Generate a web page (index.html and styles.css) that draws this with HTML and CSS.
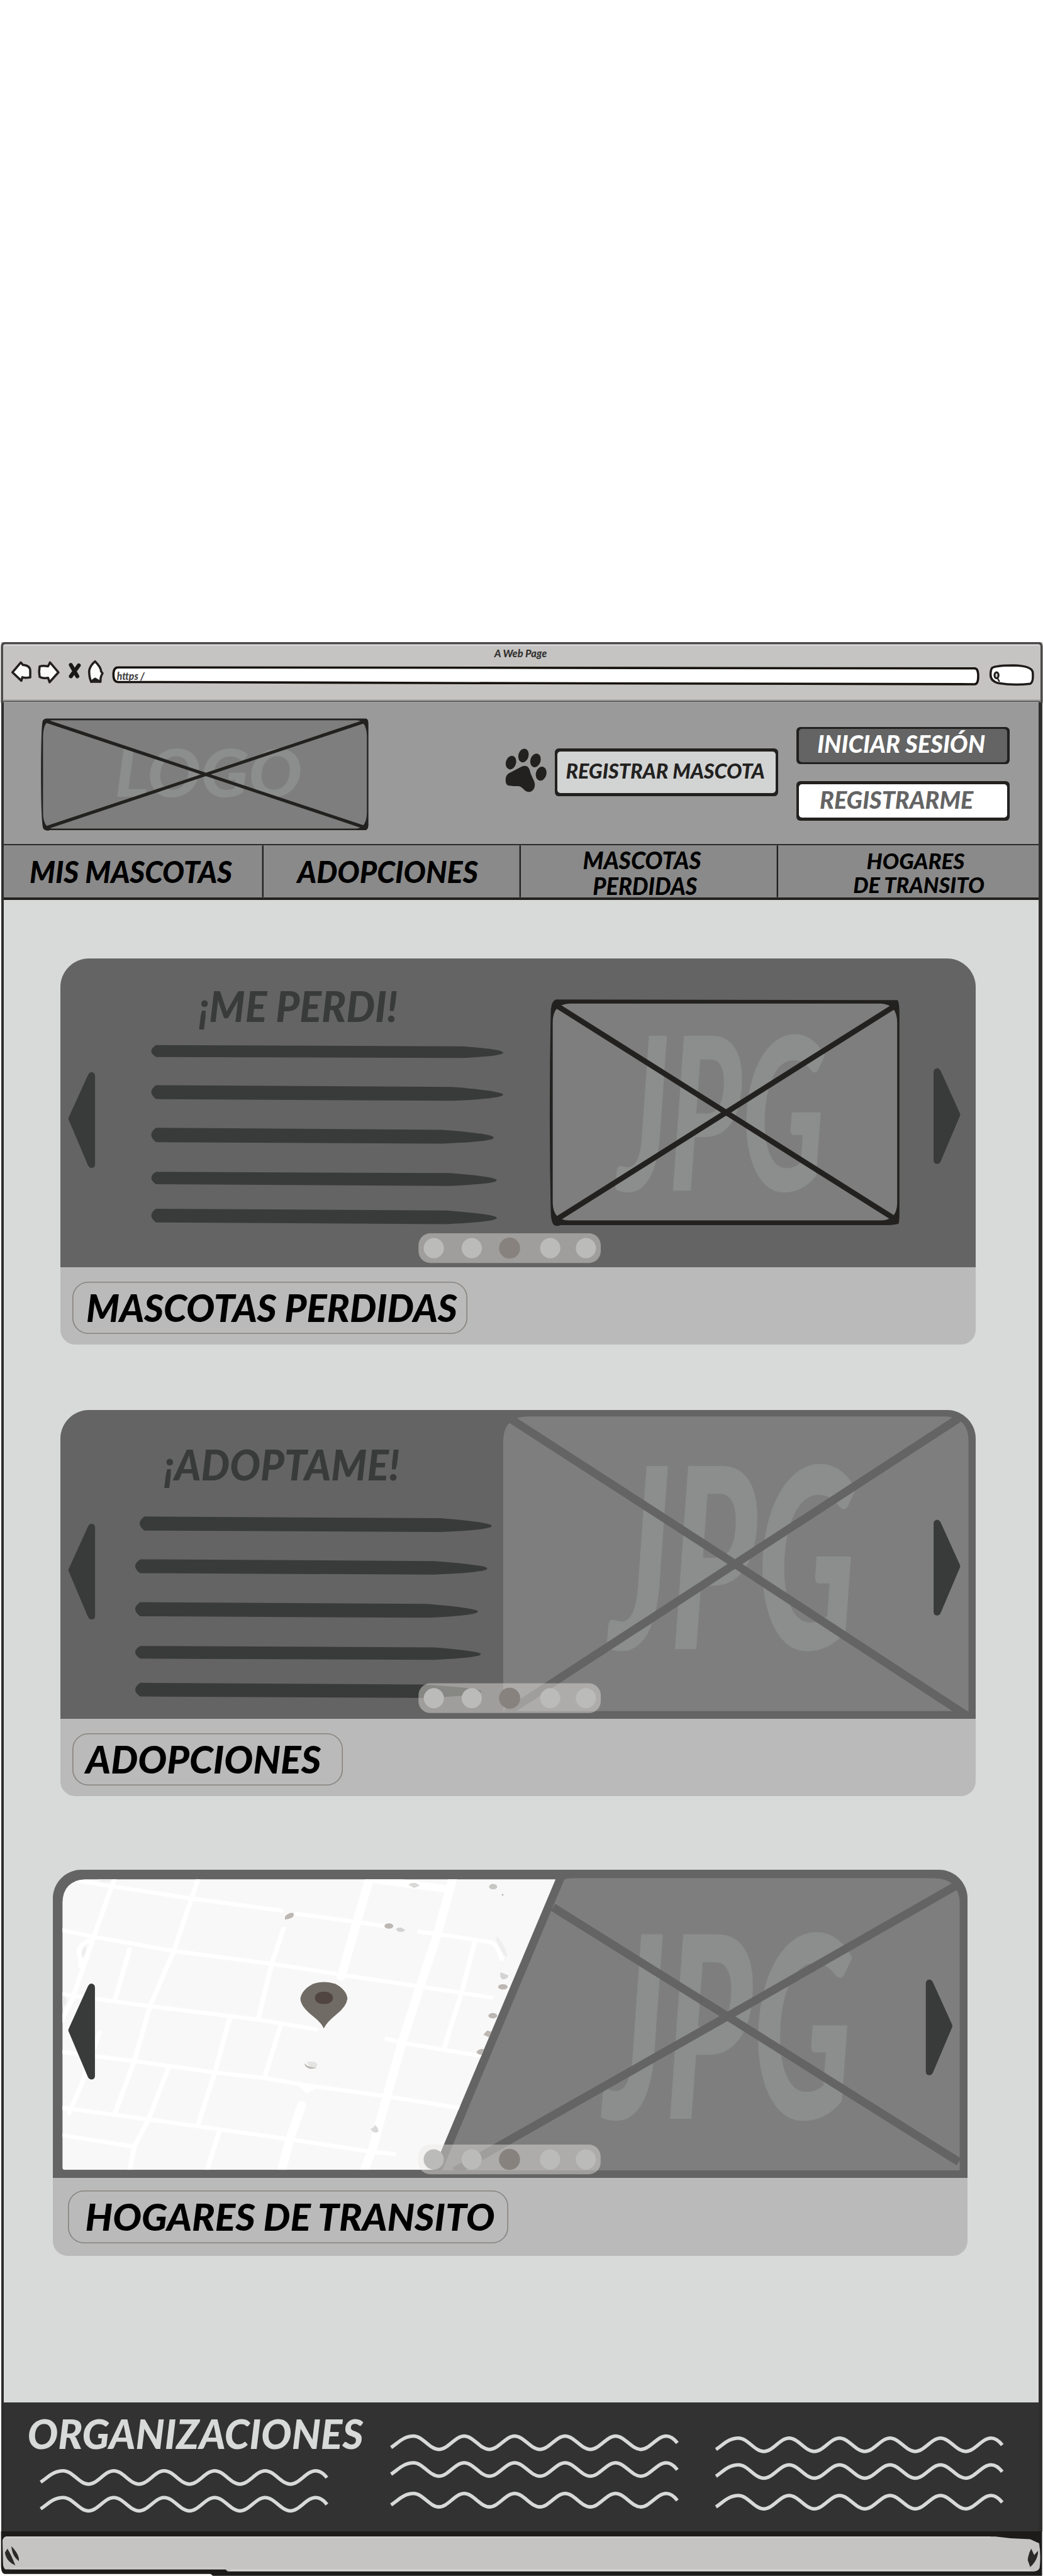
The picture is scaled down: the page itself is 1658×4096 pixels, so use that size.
FILE: index.html
```html
<!DOCTYPE html>
<html lang="es">
<head>
<meta charset="utf-8">
<title>A Web Page</title>
<link rel="stylesheet" href="styles.css">
</head>
<body>
<svg class="defs" aria-hidden="true">
  <defs>
    <path id="wave" d="M0 27C14 18 25 4 45.7 4C64 4 78 31 96.6 31S129 4 147.6 4S180 31 198.5 31S231 4 249.5 4S282 31 300.4 31S333 4 351.4 4S384 31 402.3 31S435 4 453.3 4S486 31 504.2 31S537 4 555.2 4C564 4 571 9 578 18"/>
    <path id="arrow" d="M1 91L40 5Q43 0 47 0Q54 1 54 8V186Q54 193.500 47 193.500Q43 193.500 40 189L1 97Q-.5 94 1 91Z"/>
    <g id="dots">
      <rect class="pill" width="368" height="60" rx="24"/>
      <circle cx="31" cy="30" r="20.400"/><circle cx="107.500" cy="30" r="20.400"/>
      <circle class="on" cx="184" cy="30" r="21.300"/>
      <circle cx="266" cy="30" r="20.400"/><circle cx="338" cy="30" r="20.400"/>
    </g>
  </defs>
</svg>

<div class="browser">
  <svg class="toolbar" viewBox="0 1297 2106 121">
    <rect x="2" y="1297" width="2103" height="121" fill="#c6c4c2"/>
    <path d="M8 1303.500H2099" stroke="#d9d9dd" stroke-width="2"/>
    <path d="M4 1420V1306Q4 1299 11 1299H2096Q2103 1299 2103 1306V1420" fill="none" stroke="#4a4848" stroke-width="4.500"/>
    <path d="M6 1413.500H2100" stroke="#a6a6a6" stroke-width="2"/>
    <path d="M6 1416.500H2100" stroke="#5e5e5e" stroke-width="2.500"/>
    <g fill="#fbfbfa" stroke="#221f1e" stroke-width="4.500" stroke-linejoin="round">
      <path d="M25 1358L42 1338L46 1343Q61 1344 61 1355V1368Q52 1370 45 1368L43 1375Z"/>
      <path d="M80 1346Q87 1344 97 1346L101 1338L118 1358L100 1378L97 1369Q85 1371 80 1367Q78 1356 80 1346Z"/>
      <path d="M192 1336Q204 1348 204 1356L207 1360Q202 1368 203 1377Q192 1374 184 1377Q180 1368 180 1356Q181 1345 192 1336Z"/>
      <path d="M184 1377L192 1371L202 1377Z" fill="#221f1e"/>
    </g>
    <path d="M143 1343L156 1366M159 1344L143 1366" stroke="#191817" stroke-width="8" stroke-linecap="round"/>
    <path d="M238 1348L1968 1350Q1975 1350 1975 1366Q1975 1382 1968 1382L1053 1380L238 1377.500Q229 1377 229 1363Q229 1348 238 1348Z" fill="#fff" stroke="#17130f" stroke-width="4.500"/>
    <text x="236" y="1373" textLength="56" lengthAdjust="spacingAndGlyphs" class="scribble">https /</text>
    <path d="M2003 1349Q2012 1344 2046 1344Q2082 1345 2085 1357Q2087 1378 2080 1381Q2048 1385 2016 1380Q2000 1376 2000 1363Q2000 1353 2003 1349Z" fill="#fff" stroke="#1f1c1b" stroke-width="4.500"/>
    <ellipse cx="2012" cy="1364" rx="4" ry="6" fill="#ccc" stroke="#221f1e" stroke-width="4"/>
    <path d="M2014 1370L2018 1377" stroke="#221f1e" stroke-width="3"/>
    <text x="998" y="1327" textLength="106" lengthAdjust="spacingAndGlyphs" class="scribble title">A Web Page</text>
  </svg>

  <div class="screen">
    <header class="header">
      <svg class="logo" viewBox="84 1451 660 227">
        <rect x="86" y="1453" width="656" height="223" rx="8" fill="#7e7e7e"/>
        <text x="232" y="1610" textLength="378" lengthAdjust="spacingAndGlyphs" font-size="134" class="ghost">LOGO</text>
        <path d="M94 1457L738 1672M738 1457L94 1672" stroke="#22211f" stroke-width="6.500"/>
        <path fill-rule="evenodd" fill="#22211f" d="M93 1451.500H739Q744 1452 744 1462V1668Q743 1677 738 1677H100Q94 1680 88 1675Q83 1668 83 1564Q83 1460 87 1455Q89 1452 93 1451.500ZM105 1455Q87 1456 87 1490V1640Q87 1672 105 1674H720Q741 1672 741 1640V1490Q741 1456 720 1455Z"/>
      </svg>
      <svg class="paw" viewBox="1020 1511 85 89" fill="#22211f">
        <g transform="translate(980 1300) scale(.33333)">
          <ellipse cx="155" cy="719" rx="31" ry="42" transform="rotate(17 155 719)"/>
          <ellipse cx="231" cy="676" rx="31" ry="42" transform="rotate(15 231 676)"/>
          <ellipse cx="304" cy="706" rx="31" ry="42" transform="rotate(17 304 706)"/>
          <ellipse cx="338" cy="786" rx="32" ry="43" transform="rotate(15 338 786)"/>
          <path d="M123 825C123 805 130 790 147 782L221 743C248 732 262 745 269 765C276 800 298 825 300 850C300 885 280 897 262 897C235 897 228 864 200 862C170 861 155 862 140 858C126 852 123 840 123 825Z"/>
        </g>
      </svg>
      <a class="btn add"><svg viewBox="1126 1518 440 84"><text x="1143" y="1573" textLength="402" lengthAdjust="spacingAndGlyphs" font-size="41.500">REGISTRAR MASCOTA</text></svg></a>
      <div class="account">
        <a class="btn login"><svg viewBox="1613 1472 421 67"><text x="1650" y="1520" textLength="339" lengthAdjust="spacingAndGlyphs" font-size="47">INICIAR SESIÓN</text></svg></a>
        <a class="btn signup"><svg viewBox="1613 1584 421 67"><text x="1655" y="1634" textLength="310" lengthAdjust="spacingAndGlyphs" font-size="47">REGISTRARME</text></svg></a>
      </div>
    </header>

    <nav class="nav">
      <a><svg viewBox="8 1707 524 106"><text x="60" y="1783" textLength="409" lengthAdjust="spacingAndGlyphs" font-size="60">MIS MASCOTAS</text></svg></a>
      <a><svg viewBox="532 1707 520 106"><text x="600" y="1783" textLength="365" lengthAdjust="spacingAndGlyphs" font-size="60">ADOPCIONES</text></svg></a>
      <a><svg viewBox="1052 1707 519.500 106"><text x="1177" y="1755" textLength="239" lengthAdjust="spacingAndGlyphs" font-size="47">MASCOTAS</text><text x="1197" y="1807" textLength="211" lengthAdjust="spacingAndGlyphs" font-size="47">PERDIDAS</text></svg></a>
      <a><svg viewBox="1571.500 1707 525.500 106"><text x="1750" y="1755" textLength="198" lengthAdjust="spacingAndGlyphs" font-size="44">HOGARES</text><text x="1723" y="1804" textLength="265" lengthAdjust="spacingAndGlyphs" font-size="44">DE TRANSITO</text></svg></a>
    </nav>

    <main class="main">
      <section class="card">
        <svg class="slide" viewBox="122 1936 1847 623">
          <text class="ink" x="401" y="2064.500" textLength="402" lengthAdjust="spacingAndGlyphs" font-size="84">¡ME PERDI!</text>
          <g class="bars">
            <path d="M315 2111L931 2113.500Q1016 2119 1016 2126.500Q1016 2133 931 2137L315 2135Q296 2123 315 2111Z"/>
            <path d="M315 2192L912 2195.500Q1016 2204 1016 2211Q1016 2219 912 2223.500L315 2220Q296 2206 315 2192Z"/>
            <path d="M315 2278L893 2282Q997 2290 997 2298Q997 2306 893 2310L315 2307Q296 2292 315 2278Z"/>
            <path d="M315 2367L909 2369.500Q1003 2377 1003 2384Q1003 2391 909 2395.500L315 2392Q296 2379 315 2367Z"/>
            <path d="M315 2441.500L900 2445Q1003 2453 1003 2460Q1003 2468 900 2472.500L315 2469Q296 2455 315 2441.500Z"/>
          </g>
          <rect x="1112" y="2021" width="702" height="450" rx="20" fill="#7e7e7e"/>
          <text class="ghost" x="1247" y="2405" textLength="420" lengthAdjust="spacingAndGlyphs" font-size="431">JPG</text>
          <path d="M1124 2031L1808 2463M1808 2031L1124 2463" stroke="#22211f" stroke-width="11"/>
          <path fill-rule="evenodd" fill="#22211f" d="M1122 2019L1812 2020Q1816 2024 1816 2050V2450Q1816 2468 1814 2472Q1806 2474 1797 2474.500H1132Q1123 2478 1118 2474Q1113 2468 1112 2450Q1108 2250 1112 2040Q1114 2022 1122 2019ZM1150 2027Q1116 2028 1116 2065V2430Q1117 2465 1150 2465H1778Q1811 2465 1811.500 2430V2065Q1811 2028 1778 2027Z"/>
          <use href="#arrow" class="ink" x="138" y="2165.500"/>
          <use href="#arrow" class="ink" transform="matrix(-1 0 0 1 1939 2157.500)"/>
          <use href="#dots" class="dots" x="845" y="2491"/>
        </svg>
        <div class="caption"><h2 class="tag"><svg class="t1" viewBox="0 0 798 106"><text x="28" y="81" textLength="749" lengthAdjust="spacingAndGlyphs" font-size="77">MASCOTAS PERDIDAS</text></svg></h2></div>
      </section>

      <section class="card">
        <svg class="slide" viewBox="122 2848 1847 623">
          <text class="ink" x="331" y="2990" textLength="476" lengthAdjust="spacingAndGlyphs" font-size="85">¡ADOPTAME!</text>
          <g class="bars">
            <path d="M292 3063L890 3066.500Q993 3075 993 3082Q993 3090 890 3094.500L292 3091.500Q272 3077 292 3063Z"/>
            <path d="M283 3149.500L877 3153Q984 3161 984 3168Q984 3176 877 3180.500L283 3177.500Q263 3163 283 3149.500Z"/>
            <path d="M283 3236L861 3239.500Q965 3248 965 3255Q965 3263 861 3267.500L283 3264.500Q263 3250 283 3236Z"/>
            <path d="M283 3324.500L877 3327.500Q971 3335 971 3341Q971 3348 877 3352.500L283 3350Q263 3337 283 3324.500Z"/>
            <path d="M283 3399L855 3402.500Q972 3410 972 3416Q972 3425 855 3429.500L283 3426.500Q263 3413 283 3399Z"/>
          </g>
          <path d="M1066 2861H1906Q1955.500 2861 1955.500 2912V3456H1016V2912Q1016 2861 1066 2861Z" fill="#7e7e7e"/>
          <text class="ghost" x="1230" y="3331" textLength="500" lengthAdjust="spacingAndGlyphs" font-size="510">JPG</text>
          <path d="M1028 2864L1484 3159L1950 3464M1940 2862L1484 3159L1022 3460" fill="none" stroke="#646464" stroke-width="16.500"/>
          <use href="#arrow" class="ink" x="138" y="3077.500"/>
          <use href="#arrow" class="ink" transform="matrix(-1 0 0 1 1939 3069.500)"/>
          <use href="#dots" class="dots" x="845" y="3400"/>
        </svg>
        <div class="caption"><h2 class="tag"><svg class="t2" viewBox="0 0 547 106"><text x="27" y="81" textLength="475" lengthAdjust="spacingAndGlyphs" font-size="77">ADOPCIONES</text></svg></h2></div>
      </section>

      <section class="card foster">
        <svg class="slide" viewBox="107 3776 1847 623">
          <clipPath id="mapclip"><path d="M172 3795.500H1122L875 4382H131Q126.500 4382 126.500 4377V3842Q128 3798 172 3795.500Z"/></clipPath>
          <g clip-path="url(#mapclip)">
            <rect x="120" y="3790" width="1010" height="600" fill="#f8f8f8"/>
            <g transform="translate(80 3740) scale(.6378 .5485)">
              <g fill="none" stroke="#fff" stroke-width="15" stroke-linejoin="round" stroke-linecap="round">
                <path d="M120 106L235 128L485 172L765 216M815 228L1000 257L1100 275M1203 294L1260 302L1430 333Q1450 340 1463 394"/>
                <path d="M60 285L170 312L425 365L735 412L960 453L1200 495L1430 536"/>
                <path d="M60 522L350 568L690 617L875 653M1100 688L1160 705L1400 752"/>
                <path d="M60 735L300 770L555 812L710 832L850 860L1100 900L1340 945"/>
                <path d="M60 940L345 985L560 1020L790 1058L1030 1100L1122 1113M60 1041L300 1085"/>
                <path d="M240 90L172 312L105 540L70 620M165 325Q125 335 125 375Q135 400 130 420" />
                <path d="M505 90L425 365L350 568L300 770L240 960M190 665L135 850L95 960"/>
                <path d="M285 360L240 540M410 790L345 985L300 1085L284 1180"/>
                <path d="M773 282L735 412L692 617M602 612L555 812L503 1000M763 640L712 832M570 1025L528 1180"/>
                <path d="M1377 335L1337 515L1280 725"/>
                <path stroke-width="28" d="M1047 90L1004 260L955 460M1310 90L1258 310L1205 495L1148 700L1100 900L1055 1090L1022 1190M830 932L792 1060L763 1190M1050 100L1290 137"/>
                <path stroke="none" fill="#fff" d="M800 850L890 866Q855 880 845 892Q830 865 800 850Z"/>
              </g>
              <g fill="#bcb7b3">
                <path d="M777 238Q790 222 803 225Q810 240 790 246L777 249Z"/><ellipse cx="1106" cy="273" rx="14" ry="10"/>
                <path fill="#d4d3d1" d="M1128 284Q1142 270 1158 289Q1138 303 1128 284Z"/>
                <path fill="#dad9d7" d="M1168 121Q1185 105 1204 124L1186 133Z"/>
                <ellipse cx="1436" cy="128" rx="13" ry="10" fill="#c6c6c4"/><circle cx="1466" cy="158" r="3"/>
                <path fill="#eee" d="M1448 310Q1475 345 1482 385Q1468 390 1446 325ZM136 390Q128 360 147 345Q150 365 136 390Z"/>
                <path fill="#d4d3d1" d="M1460 443L1485 455Q1480 470 1465 469Q1455 460 1460 443Z"/>
                <ellipse cx="1467" cy="497" rx="15" ry="10"/><ellipse cx="1435" cy="603" rx="14" ry="10"/>
                <path d="M1405 673L1417 658L1432 662L1425 684ZM1383 737Q1392 722 1410 727L1402 746Q1388 748 1383 737Z"/>
                <path fill="#dad9d7" d="M1048 1020Q1060 1015 1062 1005Q1073 1015 1073 1030Q1060 1040 1048 1020Z"/>
                <ellipse cx="208" cy="101" rx="22" ry="10" fill="#efefef"/><ellipse cx="74" cy="548" rx="12" ry="19" fill="#ececec"/>
                <path fill="#e4e4e2" d="M846 773Q880 768 880 785Q875 798 858 797Z"/><path d="M840 777Q845 792 878 795Q850 805 840 785Z"/>
              </g>
              <path fill="#706b64" d="M900 650Q893 630 868 607Q826 570 826 540Q830 508 866 486Q900 472 937 486Q972 508 975 540Q972 570 940 598Q908 628 900 650Z"/>
              <rect x="872" y="515" width="57" height="45" rx="25" ry="22" fill="#504540"/>
            </g>
          </g>
          <path d="M1139.500 3796Q1145 3793 1155 3793H1885Q1938 3793 1938 3845V4383H893Z" fill="#7e7e7e"/>
          <text class="ghost" x="1219" y="4279" textLength="504" lengthAdjust="spacingAndGlyphs" font-size="514">JPG</text>
          <path d="M1117 3852L1469 4072L1936 4366M1931 3808L1469 4072L918 4385" fill="none" stroke="#646464" stroke-width="16.500"/>
          <use href="#arrow" class="ink" x="138" y="4006"/>
          <use href="#arrow" class="ink" transform="matrix(-1 0 0 1 1923.500 3997.500)"/>
          <use href="#dots" class="dots" x="845" y="4331"/>
        </svg>
        <div class="caption"><h2 class="tag"><svg class="t3" viewBox="0 0 889 106"><text x="35" y="81" textLength="827" lengthAdjust="spacingAndGlyphs" font-size="76">HOGARES DE TRANSITO</text></svg></h2></div>
      </section>
    </main>

    <footer class="footer">
      <svg viewBox="8 4852 2089 260">
        <text x="56" y="4946" textLength="678" lengthAdjust="spacingAndGlyphs" font-size="82">ORGANIZACIONES</text>
        <g fill="none" stroke="#d8dad9" stroke-width="7">
          <use href="#wave" x="82.500" y="4986"/><use href="#wave" x="82.500" y="5040"/>
          <use href="#wave" x="790" y="4916"/><use href="#wave" x="790" y="4970"/><use href="#wave" x="790" y="5032"/>
          <use href="#wave" x="1446" y="4920"/><use href="#wave" x="1446" y="4974"/><use href="#wave" x="1446" y="5036"/>
        </g>
      </svg>
    </footer>
  </div>

  <svg class="statusbar" viewBox="0 5112 2106 90">
    <path d="M2 5112H2104V5202H430L425 5198H10Q2 5198 2 5180Z" fill="#1d1b1a"/>
    <path d="M12 5122.500H2010L2040 5126L2080 5128L2098 5136Q2102 5160 2099 5186Q2096 5193 2085 5193H460L455 5189H12Q6 5188 6 5175L5 5130Q7 5123 12 5122.500Z" fill="#c6c4c2"/>
    <path d="M12 5124H2000M20 5187H455" stroke="#cdcdcd" stroke-width="3"/>
    <path d="M465 5190.500H2080" stroke="#d6d6d6" stroke-width="3"/>
    <path d="M15 5147Q23 5160 31 5181Q12 5172 10 5155ZM23 5142Q40 5160 38 5172Q24 5162 23 5142ZM2082 5147Q2076 5158 2075 5170L2080 5184Q2096 5170 2096 5151L2088 5160Z" fill="#2b2a28"/>
  </svg>
</div>
</body>
</html>
```

FILE: styles.css
```css
/* 1rem is 100 units of the 2106-unit wide drawing */
html {
  font-size: 78.735px;
  background: #fff;
}

body {
  margin: 0;
  padding-top: 12.97rem;
  font-family: Lato, "Open Sans", sans-serif;
}

svg {
  display: block;
  overflow: visible;
}

.defs {
  position: absolute;
  width: 0;
  height: 0;
}

text {
  font-family: Lato, "Open Sans", sans-serif;
  font-weight: 900;
  font-style: italic;
}

.scribble {
  font-size: 22px;
  fill: #444;
}

.title {
  font-size: 21px;
  fill: #333;
}

.ghost {
  fill: #8b8e8c;
}

.ink,
.bars {
  fill: #393b3a;
}

.dots {
  fill: #bbbbb9;
}

.pill {
  fill: #eae9e3;
  fill-opacity: 0.44;
}

.on {
  fill: #87827e;
}

.browser {
  width: 21.06rem;
  height: 39.05rem;
  overflow: hidden;
}

.toolbar {
  width: 21.06rem;
  height: 1.21rem;
}

.screen {
  box-sizing: border-box;
  margin-left: 0.02rem;
  width: 21.03rem;
  padding: 0 0.08rem 0 0.06rem;
  background: #2f2e2d;
}

.header {
  box-sizing: border-box;
  display: flex;
  align-items: flex-start;
  height: 2.89rem;
  padding: 0.33rem 0 0 0.76rem;
  background: #9a9a9a;
  box-shadow: inset 0 -0.025rem #2b2b29;
}

.logo {
  width: 6.6rem;
  height: 2.27rem;
}

.paw {
  width: 0.85rem;
  height: 0.89rem;
  margin: 0.6rem 0.15rem 0 2.76rem;
}

.btn {
  display: block;
  border-radius: 0.08rem;
  background: #22211f;
}

.btn svg {
  width: 100%;
  border-radius: 0.06rem;
}

.add {
  width: 4.4rem;
  height: 0.84rem;
  margin-top: 0.6rem;
  padding: 0.065rem 0.055rem;
  fill: #22211f;
}

.add svg {
  background: #d2d4d3;
}

.account {
  display: flex;
  flex-direction: column;
  gap: 0.35rem;
  margin: 0.17rem 0 0 0.37rem;
}

.login,
.signup {
  width: 4.21rem;
  height: 0.67rem;
}

.login {
  padding: 0.04rem 0.05rem;
  fill: #fff;
}

.login svg {
  background: #646464;
}

.signup {
  padding: 0.06rem 0.05rem;
  fill: #646464;
}

.signup svg {
  background: #fff;
}

.nav {
  box-sizing: border-box;
  display: grid;
  grid-template-columns: 5.24fr 5.2fr 5.195fr 5.255fr;
  height: 1.11rem;
  background: #8a8a8a;
  box-shadow: inset 0 -0.05rem #22211f;
}

.nav a {
  height: 1.06rem;
}

.nav a + a {
  box-shadow: -0.035rem 0 0 -0.005rem #22211f;
}

.main {
  box-sizing: border-box;
  height: 30.34rem;
  padding: 1.18rem 1.28rem 0 1.145rem;
  background: #d8dad9;
}

.card {
  width: 18.47rem;
  height: 7.8rem;
  margin-bottom: 1.32rem;
  border-radius: 0.58rem 0.58rem 0.3rem 0.3rem;
  background: #bababa;
}

.foster {
  margin: 1.48rem 0 0 -0.155rem;
}

.slide {
  width: 18.47rem;
  height: 6.23rem;
  border-radius: 0.58rem 0.58rem 0 0;
  background: #646464;
}

.caption {
  padding: 0.29rem 0 0 0.23rem;
}

.foster .caption {
  padding: 0.25rem 0 0 0.3rem;
}

.tag {
  box-sizing: border-box;
  display: inline-block;
  margin: 0;
  height: 1.06rem;
  border-radius: 0.32rem;
  box-shadow: inset 0 0 0 0.02rem #87827e;
}

.tag svg {
  height: 1.06rem;
}

.t1 {
  width: 7.98rem;
}

.t2 {
  width: 5.47rem;
}

.t3 {
  width: 8.89rem;
}

.footer {
  height: 2.6rem;
  background: #323232;
  fill: #d8dad9;
}

.statusbar {
  width: 21.06rem;
  height: 0.9rem;
}
```
